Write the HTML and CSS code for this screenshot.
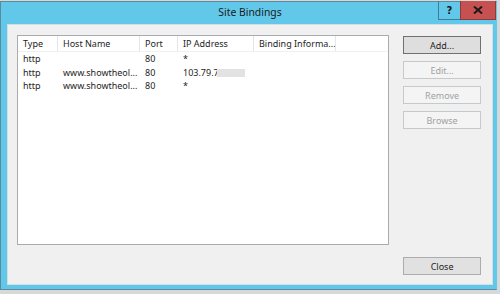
FILE: index.html
```html
<!DOCTYPE html>
<html>
<head>
<meta charset="utf-8">
<link rel="stylesheet" href="styles.css">
</head>
<body>
<div class="window">
  <div class="titlebar">
    <div class="title">Site Bindings</div>
    <div class="controls">
      <div class="ctl help">?</div>
      <div class="ctl close">
        <svg width="10" height="8" viewBox="0 0 10 8"><path d="M1 0.5 L9 7.5 M9 0.5 L1 7.5" stroke="#1a1a1a" stroke-width="2"/></svg>
      </div>
    </div>
  </div>
  <div class="client">
    <div class="list">
      <div class="row head">
        <div class="c c1">Type</div>
        <div class="c c2">Host Name</div>
        <div class="c c3">Port</div>
        <div class="c c4">IP Address</div>
        <div class="c c5">Binding Informa...</div>
      </div>
      <div class="row">
        <div class="c c1">http</div>
        <div class="c c2"></div>
        <div class="c c3">80</div>
        <div class="c c4">*</div>
      </div>
      <div class="row">
        <div class="c c1">http</div>
        <div class="c c2">www.showtheol...</div>
        <div class="c c3">80</div>
        <div class="c c4">103.79.7<span class="blur"></span></div>
      </div>
      <div class="row">
        <div class="c c1">http</div>
        <div class="c c2">www.showtheol...</div>
        <div class="c c3">80</div>
        <div class="c c4">*</div>
      </div>
    </div>
    <div class="side">
      <div class="btns">
        <div class="btn default">Add...</div>
        <div class="btn disabled">Edit...</div>
        <div class="btn disabled">Remove</div>
        <div class="btn disabled">Browse</div>
      </div>
      <div class="btn normal">Close</div>
    </div>
  </div>
</div>
</body>
</html>
```
FILE: styles.css
```css
html, body {
  margin: 0;
  padding: 0;
}
body {
  width: 500px;
  height: 294px;
  background: #d6d8da;
  font-family: "Noto Sans", "Open Sans", sans-serif;
  font-size: 9px;
  color: #1e1e1e;
  overflow: hidden;
}
.window {
  margin-top: 1px;
  width: 497px;
  height: 289px;
  box-sizing: border-box;
  background: #62c8ea;
  border: 1px solid #5b8a9c;
  border-right-color: #62c8ea;
  display: flex;
  flex-direction: column;
  padding: 0 3px 4px 6px;
}
.titlebar {
  position: relative;
  height: 22px;
  display: flex;
  align-items: center;
  justify-content: center;
}
.title {
  font-size: 10.4px;
  color: #1a1a1a;
  margin-top: -2px;
}
.controls {
  position: absolute;
  top: -1px;
  right: -3px;
  display: flex;
}
.ctl {
  height: 19px;
  box-sizing: border-box;
  display: flex;
  align-items: center;
  justify-content: center;
}
.help {
  width: 22px;
  border: 1px solid #3d7d96;
  border-top: none;
  border-right: none;
  font-weight: bold;
  font-size: 10px;
  color: #1a1a1a;
  font-family: "DejaVu Sans", sans-serif;
}
.close {
  width: 36px;
  background: #c75050;
  border: 1px solid #8d3a3a;
  border-top: none;
}
.client {
  flex: 1;
  background: #f0f0f0;
  border: 1px solid #d4dde2;
  display: flex;
  padding: 10px 11px 10px 9px;
  gap: 14px;
}
.list {
  width: 373px;
  height: 210px;
  box-sizing: border-box;
  background: #fff;
  border: 1px solid #a8acb0;
  display: flex;
  flex-direction: column;
}
.row {
  display: flex;
  height: 13.5px;
  line-height: 13px;
}
.row.head {
  height: 15px;
  line-height: 15px;
  border-bottom: 1px solid #f0f0f0;
}
.c {
  box-sizing: border-box;
  padding-left: 5px;
  white-space: nowrap;
  overflow: hidden;
}
.head .c {
  border-right: 1px solid #e3e5e8;
}
.c1 { width: 40px; }
.c2 { width: 82px; }
.c3 { width: 38px; }
.c4 { width: 76px; }
.c5 { width: 82px; }
.blur {
  display: inline-block;
  width: 28px;
  height: 8px;
  margin-left: -2px;
  background: #e2e2e2;
  vertical-align: -1px;
}
.side {
  width: 78px;
  display: flex;
  flex-direction: column;
  justify-content: space-between;
  padding-top: 1px;
}
.btns {
  display: flex;
  flex-direction: column;
  gap: 7px;
}
.btn {
  height: 18px;
  box-sizing: border-box;
  display: flex;
  align-items: center;
  justify-content: center;
  border: 1px solid #acacac;
  background: #e1e1e1;
  color: #1e1e1e;
}
.btn.default {
  border-color: #707070;
  background: #dedede;
}
.btn.disabled {
  border-color: #c6c9cb;
  background: #f4f4f4;
  color: #a2a2a2;
}
.btn.normal {
  margin-bottom: -1px;
}
```
